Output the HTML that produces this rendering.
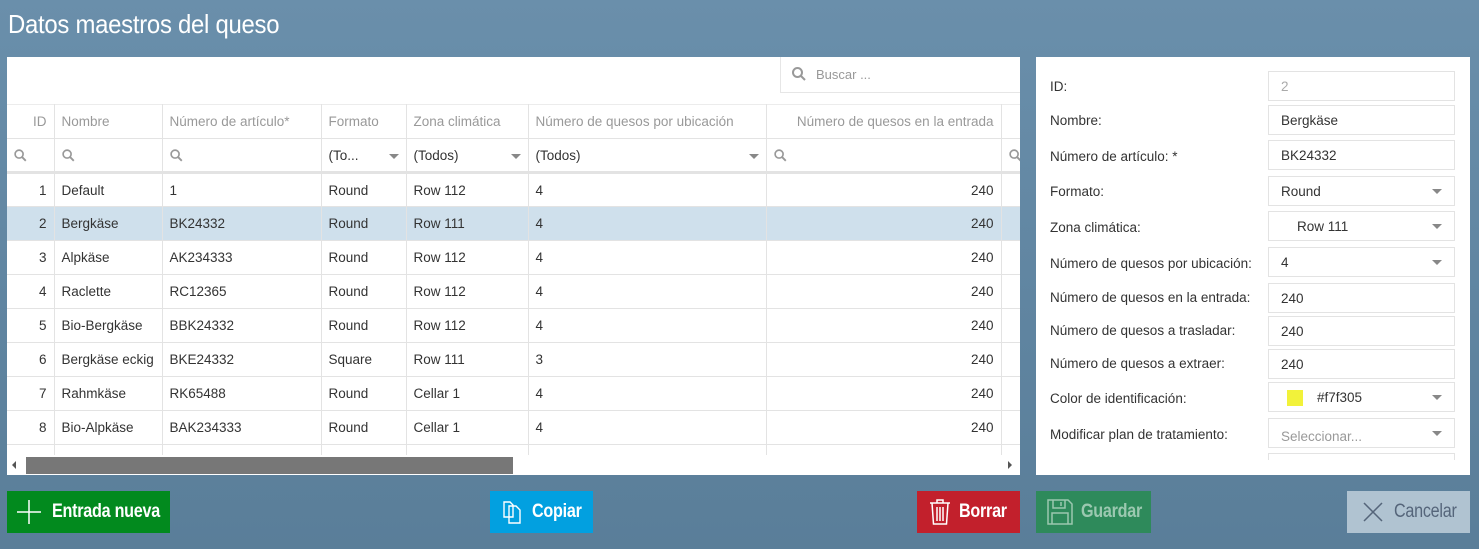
<!DOCTYPE html>
<html><head><meta charset="utf-8"><style>
*{box-sizing:border-box;margin:0;padding:0}
body{width:1479px;height:549px;overflow:hidden;background:linear-gradient(180deg,#6a8fab 0%,#5f84a0 60%,#5a7e99 100%);font-family:"Liberation Sans",sans-serif;font-size:14px;color:#333;position:relative}
.title{position:absolute;left:8px;top:9px;font-size:26px;color:#fff;letter-spacing:-0.3px;transform:scaleX(.92);transform-origin:left;white-space:nowrap}
.grid{position:absolute;left:7px;top:57px;width:1013px;height:418px;background:#fff;overflow:hidden}
.search{position:absolute;left:773px;top:0;width:245px;height:36px;border:1px solid #e6e6e6;border-top:none;color:#999;font-size:13px;padding:10px 0 0 35px}
table{position:absolute;left:0;top:47px;border-collapse:collapse;table-layout:fixed;width:1030px}
td{border:1px solid #e3e3e3;height:34px;padding:0 7px;white-space:nowrap;overflow:hidden;font-size:13.5px}
tr.h td{color:#999;border-top:1px solid #ececec}
tr.f td{color:#333;border-bottom:3px solid #e3e3e3}
tr.sel td{background:#cfe0ec}
td.r{text-align:right}
td:first-child{border-left:none}
.arr{float:right;width:0;height:0;border-left:5px solid transparent;border-right:5px solid transparent;border-top:5px solid #888;margin-top:6px}
.mg{display:inline-block;vertical-align:middle}
.sb{position:absolute;left:0;top:398px;width:1013px;height:20px;background:#fff}
.thumb{position:absolute;left:19px;top:2px;width:487px;height:17px;background:#777}
.panel{position:absolute;left:1036px;top:57px;width:434px;height:418px;background:#fff;overflow:hidden}
.clip{position:absolute;left:0;top:0;width:434px;height:403px;overflow:hidden}
.lb{position:absolute;left:14px;font-size:13.5px;color:#333}
.in{position:absolute;left:232px;width:187px;height:30px;border:1px solid #e3e3e3;padding:7px 12px;font-size:13.5px}
.in .arr{margin-top:5px}
.btn{position:absolute;top:491px;height:42px;color:#fff;font-size:19px;font-weight:bold;display:flex;align-items:center;letter-spacing:-.3px;white-space:nowrap}
.btn span{display:inline-block;transform:scaleX(.85);transform-origin:left;white-space:nowrap}
</style></head><body>
<div class="title">Datos maestros del queso</div>
<div class="grid">
<div class="search"><svg style="position:absolute;left:11px;top:10px" width="14" height="14" viewBox="0 0 14 14"><circle cx="5.5" cy="5.5" r="4.5" fill="none" stroke="#999" stroke-width="2"/><path d="M9 9l4 4" stroke="#999" stroke-width="2"/></svg>Buscar ...</div>
<table>
<colgroup><col style="width:47px"><col style="width:108px"><col style="width:159px"><col style="width:85px"><col style="width:122px"><col style="width:238px"><col style="width:235px"><col></colgroup>
<tr class="h"><td class="r">ID</td><td>Nombre</td><td>Número de artículo*</td><td>Formato</td><td>Zona climática</td><td>Número de quesos por ubicación</td><td class="r">Número de quesos en la entrada</td><td></td></tr>
<tr class="f"><td><svg class="mg" width="13" height="13" viewBox="0 0 14 14"><circle cx="5.5" cy="5.5" r="4.3" fill="none" stroke="#999" stroke-width="1.8"/><path d="M8.7 8.7l4 4" stroke="#999" stroke-width="2"/></svg></td><td><svg class="mg" width="13" height="13" viewBox="0 0 14 14"><circle cx="5.5" cy="5.5" r="4.3" fill="none" stroke="#999" stroke-width="1.8"/><path d="M8.7 8.7l4 4" stroke="#999" stroke-width="2"/></svg></td><td><svg class="mg" width="13" height="13" viewBox="0 0 14 14"><circle cx="5.5" cy="5.5" r="4.3" fill="none" stroke="#999" stroke-width="1.8"/><path d="M8.7 8.7l4 4" stroke="#999" stroke-width="2"/></svg></td><td>(To...<i class="arr"></i></td><td>(Todos)<i class="arr"></i></td><td>(Todos)<i class="arr"></i></td><td><svg class="mg" width="13" height="13" viewBox="0 0 14 14"><circle cx="5.5" cy="5.5" r="4.3" fill="none" stroke="#999" stroke-width="1.8"/><path d="M8.7 8.7l4 4" stroke="#999" stroke-width="2"/></svg></td><td><svg class="mg" width="13" height="13" viewBox="0 0 14 14"><circle cx="5.5" cy="5.5" r="4.3" fill="none" stroke="#999" stroke-width="1.8"/><path d="M8.7 8.7l4 4" stroke="#999" stroke-width="2"/></svg></td></tr>
<tr><td class="r">1</td><td>Default</td><td>1</td><td>Round</td><td>Row 112</td><td>4</td><td class="r">240</td><td></td></tr>
<tr class="sel"><td class="r">2</td><td>Bergkäse</td><td>BK24332</td><td>Round</td><td>Row 111</td><td>4</td><td class="r">240</td><td></td></tr>
<tr><td class="r">3</td><td>Alpkäse</td><td>AK234333</td><td>Round</td><td>Row 112</td><td>4</td><td class="r">240</td><td></td></tr>
<tr><td class="r">4</td><td>Raclette</td><td>RC12365</td><td>Round</td><td>Row 112</td><td>4</td><td class="r">240</td><td></td></tr>
<tr><td class="r">5</td><td>Bio-Bergkäse</td><td>BBK24332</td><td>Round</td><td>Row 112</td><td>4</td><td class="r">240</td><td></td></tr>
<tr><td class="r">6</td><td>Bergkäse eckig</td><td>BKE24332</td><td>Square</td><td>Row 111</td><td>3</td><td class="r">240</td><td></td></tr>
<tr><td class="r">7</td><td>Rahmkäse</td><td>RK65488</td><td>Round</td><td>Cellar 1</td><td>4</td><td class="r">240</td><td></td></tr>
<tr><td class="r">8</td><td>Bio-Alpkäse</td><td>BAK234333</td><td>Round</td><td>Cellar 1</td><td>4</td><td class="r">240</td><td></td></tr>
<tr><td></td><td></td><td></td><td></td><td></td><td></td><td></td><td></td></tr>
</table>
<div class="sb"><div style="position:absolute;left:5px;top:6px;border-top:4px solid transparent;border-bottom:4px solid transparent;border-right:4px solid #555"></div><div class="thumb"></div><div style="position:absolute;left:1001px;top:6px;border-top:4px solid transparent;border-bottom:4px solid transparent;border-left:4px solid #555"></div></div>
</div>
<div class="panel"><div class="clip">
<div class="lb" style="top:22px">ID:</div><div class="in" style="top:14px;color:#aaa">2</div>
<div class="lb" style="top:56px">Nombre:</div><div class="in" style="top:48px">Bergkäse</div>
<div class="lb" style="top:92px">Número de artículo: *</div><div class="in" style="top:83px">BK24332</div>
<div class="lb" style="top:127px">Formato:</div><div class="in" style="top:119px">Round<i class="arr"></i></div>
<div class="lb" style="top:163px">Zona climática:</div><div class="in" style="top:154px;padding-left:28px">Row 111<i class="arr"></i></div>
<div class="lb" style="top:199px">Número de quesos por ubicación:</div><div class="in" style="top:190px">4<i class="arr"></i></div>
<div class="lb" style="top:233px">Número de quesos en la entrada:</div><div class="in" style="top:226px">240</div>
<div class="lb" style="top:266px">Número de quesos a trasladar:</div><div class="in" style="top:259px">240</div>
<div class="lb" style="top:299px">Número de quesos a extraer:</div><div class="in" style="top:292px">240</div>
<div class="lb" style="top:334px">Color de identificación:</div><div class="in" style="top:325px;padding-left:48px"><span style="position:absolute;left:18px;top:7px;width:16px;height:16px;background:#f2f23a"></span>#f7f305<i class="arr"></i></div>
<div class="lb" style="top:370px">Modificar plan de tratamiento:</div><div class="in" style="top:361px;color:#999;padding-top:10px">Seleccionar...<i class="arr" style="margin-top:2px"></i></div>
<div class="in" style="top:396px"></div>
</div></div>
<div class="btn" style="left:7px;width:163px;background:#028a1e"><svg style="margin:0 10px 0 9px;flex:none" width="26" height="26"><path d="M13 1v24M1 13h24" stroke="#fff" stroke-width="1.5"/></svg><span>Entrada nueva</span></div>
<div class="btn" style="left:490px;width:103px;background:#02a0e0"><svg style="margin:0 8px 0 10px;flex:none" width="24" height="26" viewBox="0 0 24 26"><path d="M4 3h6l3 3v12H4z M9 7h7l4 4v13H9z" fill="none" stroke="#fff" stroke-width="1.4"/></svg><span>Copiar</span></div>
<div class="btn" style="left:917px;width:103px;background:#c2202c"><svg style="margin:0 8px 0 12px;flex:none" width="22" height="28" viewBox="0 0 22 28"><path d="M1 5h20M8 5V2h6v3M3 5l1.5 21h13L19 5M8 9v14M11 9v14M14 9v14" fill="none" stroke="#fff" stroke-width="1.5"/></svg><span>Borrar</span></div>
<div class="btn" style="left:1036px;width:115px;background:#2e8a5b;color:#9bc8b0"><svg style="margin:0 8px 0 11px;flex:none" width="26" height="26" viewBox="0 0 26 26"><path d="M1 1h20l4 4v20H1z M6 1v8h12V1 M14 3v4 M5 14h16v11H5z" fill="none" stroke="#9bc8b0" stroke-width="1.5"/></svg><span>Guardar</span></div>
<div class="btn" style="left:1347px;width:123px;background:#b0c3d1;color:#55657a;font-weight:normal"><svg style="margin:0 11px 0 16px;flex:none" width="20" height="20"><path d="M1 1l18 18M19 1L1 19" stroke="#55657a" stroke-width="1.5"/></svg><span>Cancelar</span></div>
</body></html>
